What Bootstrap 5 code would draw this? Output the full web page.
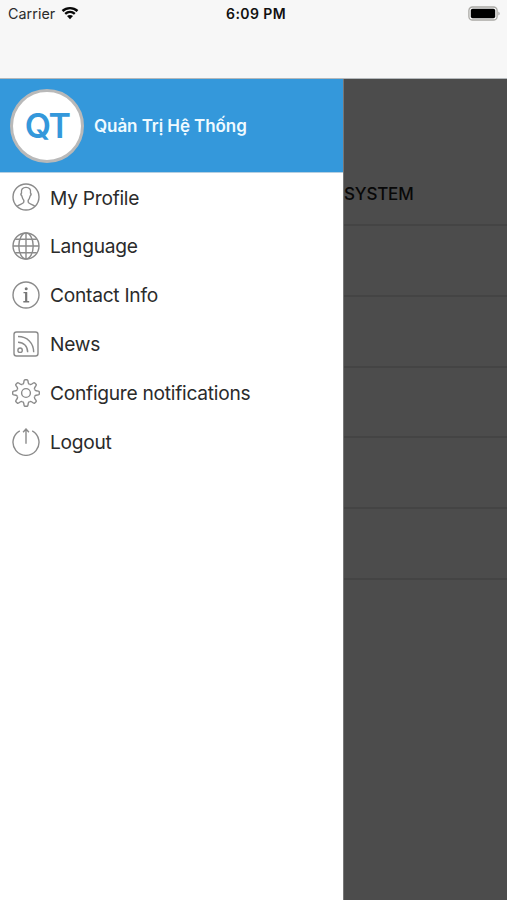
<!DOCTYPE html>
<html lang="vi">
<head>
<meta charset="utf-8">
<meta name="viewport" content="width=device-width, initial-scale=1">
<title>Menu</title>
<link href="https://cdn.jsdelivr.net/npm/bootstrap@5.3.0/dist/css/bootstrap.min.css" rel="stylesheet">
<style>
body{font-family:Inter,"Liberation Sans",sans-serif;color:#2b2b2b;background:#fff}
.topbar{height:79px;background:#f7f7f7;border-bottom:1px solid #b4b8bb}
.status{height:27px;padding-left:8px;padding-right:6px;font-size:14px;line-height:27px}
.carrier{font-size:14.3px;letter-spacing:.05px}
.clock{font-weight:600;color:#111;letter-spacing:.4px;padding-left:3px}
.drawer{width:343px}
.profile{height:94px;background:#3498db;border-bottom:1px solid #b5cfe1;padding-left:10px;gap:10px}
.avatar{width:74px;height:74px;border:3px solid #b9b9b9;color:#3498db;font-size:34px;font-weight:600;letter-spacing:-1.7px}
.person{font-size:17px;font-weight:600;color:#effaff;letter-spacing:-.07px;padding-top:2px}
.entry{height:48.85px;padding-left:11.5px;gap:10.5px;font-size:19.2px;letter-spacing:-.27px}
.entry span{padding-top:1px}
.entry svg{width:28px;height:28px;fill:none;stroke:#8b8b8b;stroke-width:1.4}
.shade{background:#4c4c4c;border-left:1px solid #777}
.heading{height:147px;padding-top:103px;font-size:17px;font-weight:500;color:#080808;letter-spacing:-.2px}
.line{height:70.8px}
.heading,.line{border-bottom:2px solid #444}
</style>
<script src="https://cdn.jsdelivr.net/npm/bootstrap@5.3.0/dist/js/bootstrap.bundle.min.js"></script>
</head>
<body>
<div class="d-flex flex-column vh-100 overflow-hidden">
<header class="topbar flex-shrink-0">
<div class="status row g-0">
<div class="col d-flex align-items-center"><span class="carrier">Carrier</span>
<svg class="ms-1" width="22" height="16" viewBox="0 0 22 16" fill="none" stroke="#080808" stroke-width="2.4"><path d="M3.5 5C7.7 1.1 14.3 1.1 18.5 5M6.2 7.9C9 5.4 13 5.4 15.8 7.9"/><path d="M8 10.1C9.7 8.6 12.3 8.6 14 10.1L11 13.3Z" fill="#080808" stroke="none"/></svg></div>
<div class="col-auto clock">6:09 PM</div>
<div class="col d-flex align-items-center justify-content-end"><svg width="33" height="16" viewBox="0 0 33 16"><rect x=".9" y="1" width="28.2" height="13" rx="3.6" fill="#f7f7f7" stroke="#aaa9a5" stroke-width="1.3"/><rect x="2.8" y="2.8" width="24.4" height="9.4" rx="1.8"/><path d="M30.5 5.4Q32.6 7.5 30.5 9.6Z" fill="#8d8d8d"/></svg></div>
</div>
</header>
<main class="d-flex flex-grow-1">
<aside class="drawer bg-white flex-shrink-0">
<div class="profile d-flex align-items-center">
<div class="avatar rounded-circle bg-white d-flex align-items-center justify-content-center">QT</div>
<div class="person">Quản Trị Hệ Thống</div>
</div>
<nav>
<div class="entry d-flex align-items-center"><svg viewBox="0 0 28 28"><circle cx="14" cy="14" r="13"/><path d="M5.2 23.3C7 21.5 11.5 20.9 11.8 19.2V17.2C10.4 16 10.2 14.2 9.9 13.1C9 12.2 8.8 10.7 9.5 10C8.7 6 11 4.4 14 4.4S19.3 6 18.5 10C19.2 10.7 19 12.2 18.1 13.1C17.8 14.2 17.6 16 16.2 17.2V19.2C16.5 20.9 21 21.5 22.8 23.3"/></svg><span>My Profile</span></div>
<div class="entry d-flex align-items-center"><svg viewBox="0 0 28 28"><circle cx="14" cy="14" r="13"/><ellipse cx="14" cy="14" rx="7.2" ry="13"/><path d="M14 1V27M1 14H27M3.2 7.3H24.8M3.2 20.7H24.8"/></svg><span>Language</span></div>
<div class="entry d-flex align-items-center"><svg viewBox="0 0 28 28"><circle cx="14" cy="14" r="13"/><circle cx="14.2" cy="7.7" r="1.5" fill="#777" stroke="none"/><path d="M11.5 11.6H14.5V20.4M11.3 20.7H17.2" stroke="#777"/><path d="M14.1 11.6V20.4" stroke="#777" stroke-width="2"/></svg><span>Contact Info</span></div>
<div class="entry d-flex align-items-center"><svg viewBox="0 0 28 28"><rect x="2" y="2" width="24" height="24" rx="2.5"/><circle cx="8.1" cy="20.2" r="2.2"/><path d="M6 12.3C11.7 12.3 15.7 16.3 15.7 22.3M6 6.5C15.3 6.5 21.7 13 21.7 22.3"/></svg><span>News</span></div>
<div class="entry d-flex align-items-center"><svg viewBox="-14 -14 28 28"><defs><path id="tooth" d="M-3.56 -8.6Q-2.5 -9.1 -2.3 -10.1L-1.9 -12.3Q-1.7 -13.3 -.9 -13.3H.9Q1.7 -13.3 1.9 -12.3L2.3 -10.1Q2.5 -9.1 3.56 -8.6"/></defs><use href="#tooth"/><use href="#tooth" transform="rotate(45)"/><use href="#tooth" transform="rotate(90)"/><use href="#tooth" transform="rotate(135)"/><use href="#tooth" transform="rotate(180)"/><use href="#tooth" transform="rotate(225)"/><use href="#tooth" transform="rotate(270)"/><use href="#tooth" transform="rotate(315)"/><circle r="4.4"/></svg><span>Configure notifications</span></div>
<div class="entry d-flex align-items-center"><svg viewBox="0 0 28 28"><path d="M7.8 2.9A13 13 0 1 0 20.2 2.9M14 15.7V1M11.1 4.3L14 1L16.9 4.3"/></svg><span>Logout</span></div>
</nav>
</aside>
<section class="shade flex-grow-1">
<div class="heading">SYSTEM</div>
<div class="line"></div><div class="line"></div><div class="line"></div><div class="line"></div><div class="line"></div>
</section>
</main>
</div>
</body>
</html>
